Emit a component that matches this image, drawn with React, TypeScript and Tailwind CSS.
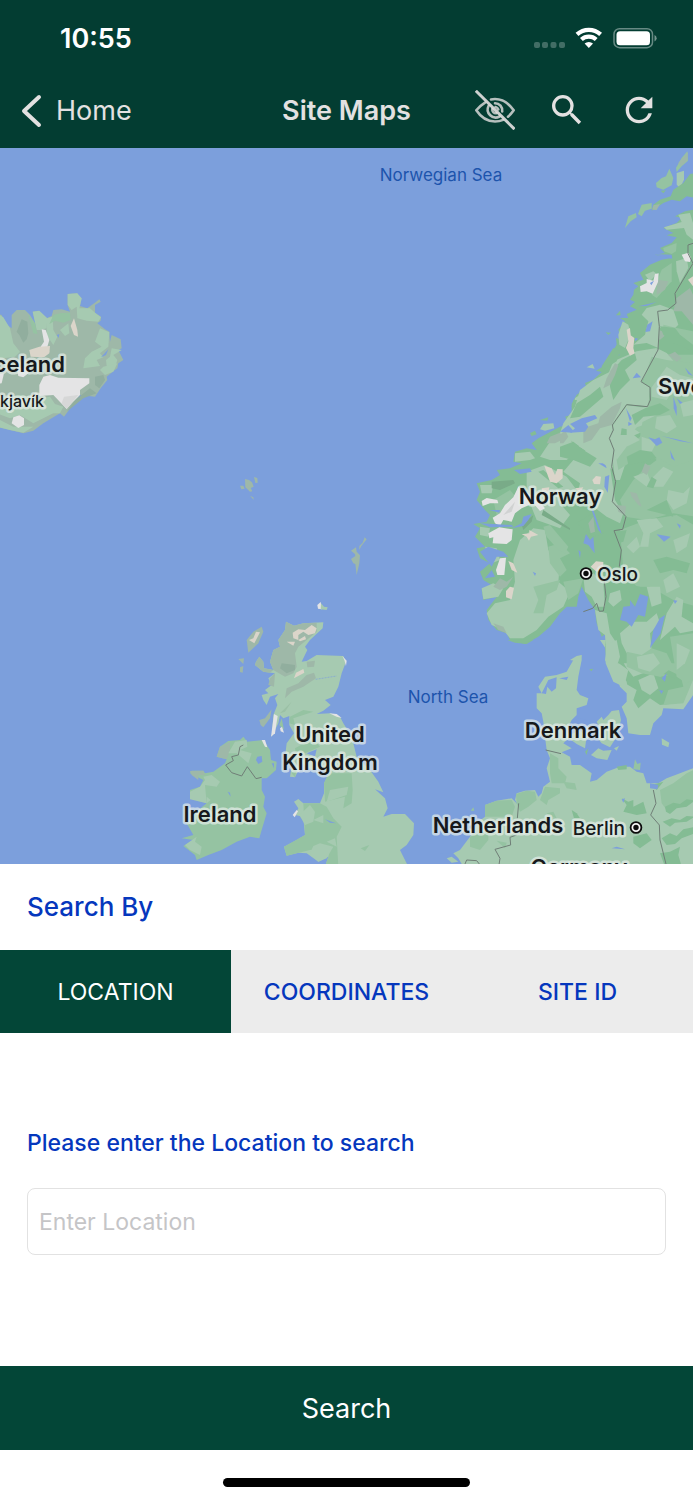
import { useState } from "react";
import type { ReactNode } from "react";
import { MdRefresh, MdSearch } from "react-icons/md";

const LIGHT = "#a6cab1";
const MID = "#95c3a2";
const DARK = "#84bc94";
const GREY = "#9eb8a8";
const SAND = "#dbd5ca";
const ICE = "#e4e4e5";
const SEA = "#7c9fdc";

type Patch = [fill: string, d: string];

/* Each region is drawn on its own grid, three units to one map pixel. */
const iceland: Patch[] = [
  [GREY, "M-10 100L5 105 15 130 35 145 35 105 50 90 75 90 90 105 105 130 112 150 98 95 115 92 140 115 155 108 160 90 185 88 210 95 203 75 203 42 232 40 235 52 245 55 240 78 262 85 275 75 285 68 298 58 302 65 285 75 285 98 303 110 302 122 292 130 315 148 328 155 330 185 335 165 362 178 365 205 355 210 370 240 355 250 352 265 338 275 320 290 322 300 302 325 285 350 240 345 192 410 180 400 160 412 130 430 100 452 70 460 30 450 -10 440Z"],
  [LIGHT, "M-10 100L10 112 30 145 40 190 60 215 45 230 10 235 -10 260Z"],
  [LIGHT, "M-10 350L20 350 60 345 120 355 150 350 165 372 190 380 180 400 160 400 130 415 100 430 60 405 30 415 -10 400Z"],
  [LIGHT, "M-10 415L40 440 100 440 70 458 30 450 -10 440Z"],
  [LIGHT, "M98 95L118 92 142 115 140 145 122 150 110 150Z"],
  [LIGHT, "M140 115L158 110 160 150 172 170 160 195 140 165Z"],
  [LIGHT, "M203 42L232 40 245 55 238 85 270 85 285 98 303 112 295 125 260 122 232 115 230 80 215 90 203 75Z"],
  [LIGHT, "M300 145L328 157 325 200 300 220 310 232 290 240 300 258 250 265 255 235 275 215 305 200 285 185Z"],
  [LIGHT, "M335 205L365 210 340 225 352 240 345 262 320 258 318 240 330 230Z"],
  [LIGHT, "M310 260L352 250 340 275 315 285 300 270Z"],
  [MID, "M160 105L180 100 210 98 212 120 190 128 165 122 148 132Z"],
  [MID, "M85 105L105 130 112 162 100 160 92 130Z"],
  [LIGHT, "M180 150L205 130 208 160 195 168Z"],
  ["#91ae9e", "M50 155L65 118 82 125 85 160 80 178 70 188 58 165Z"],
  ["#91ae9e", "M285 290L310 285 315 300 298 325 285 315Z"],
  ["#91ae9e", "M225 360L270 325 290 340 250 355 200 395Z"],
  [ICE, "M125 148L137 150 148 180 142 200 148 215 115 210 132 185Z"],
  [SAND, "M88 210L118 200 150 198 148 220 132 232 92 230Z"],
  [SAND, "M222 115L232 150 234 170 222 165 212 138Z"],
  [ICE, "M50 265L85 262 85 280 70 292 55 288Z"],
  [ICE, "M-10 282L12 280 5 310 -10 312Z"],
  [ICE, "M118 315L130 290 150 285 175 293 268 295 268 310 240 330 240 345 215 370 200 387 160 345 118 348Z"],
  ["#d6d7d7", "M192 350L235 345 200 387 185 370Z"],
  [ICE, "M35 430L40 412 58 406 72 415 72 435 55 444Z"],
  [SEA, "M170 165L178 162 176 174Z"],
  [SEA, "M303 232L325 208 318 225Z"],
];

const northNorway: Patch[] = [
  [DARK, "M699 185L675 190 645 205 665 210 650 225 610 240 640 255 620 262 650 268 635 285 600 300 615 315 585 320 635 330 605 335 570 350 540 375 550 395 520 405 535 415 522 425 520 440 510 455 525 462 510 475 530 485 500 498 505 510 480 510 495 520 475 545 485 575 468 570 470 590 455 615 480 620 440 640 430 655 408 668 425 672 400 695 375 705 380 720 350 740 335 768 335 800 710 800 710 185Z"],
  [MID, "M648 60L665 30 682 10 684 38 665 55 650 72Z"],
  [GREY, "M655 45L684 12 682 38 662 55Z"],
  [MID, "M588 105L605 90 618 85 628 62 640 90 635 112 610 125 590 118Z"],
  [LIGHT, "M650 75L672 68 672 95 660 120 650 110Z"],
  [DARK, "M640 125L670 105 690 78 710 75 710 150 680 145 660 160 635 155 610 165 575 188 580 170 600 155 632 145Z"],
  [GREY, "M580 172L600 168 590 186 577 185Z"],
  [MID, "M534 198L545 170 575 165 575 182 555 188 545 205Z"],
  [MID, "M495 240L505 205 528 195 530 208 512 220Z"],
  [DARK, "M602 128L618 127 610 136Z"],
  [DARK, "M468 502L480 488 482 502Z"],
  [DARK, "M437 553L453 554 445 561Z"],
  [LIGHT, "M380 658L398 648 404 662Z"],
  [LIGHT, "M655 200L690 195 699 225 699 275 680 260 672 240 620 245 612 238 665 222Z"],
  [MID, "M610 300L650 285 648 310 635 318 612 310Z"],
  [LIGHT, "M648 340L680 330 685 360 660 405 650 370Z"],
  [LIGHT, "M555 380L580 370 590 378 570 400Z"],
  [MID, "M605 365L635 345 635 400 590 450 575 440Z"],
  [GREY, "M592 395L625 400 615 425 590 440Z"],
  [GREY, "M650 450L690 420 699 440 699 530 665 490 640 490Z"],
  [GREY, "M575 540L625 555 600 575 575 568Z"],
  [LIGHT, "M560 480L600 470 640 485 655 530 640 545 600 540 595 600 560 585 520 590 555 560 565 520 545 500Z"],
  [LIGHT, "M475 560L488 520 505 530 512 560 495 600 478 590Z"],
  [LIGHT, "M530 610L590 600 575 650 545 700 565 720 570 780 420 800 340 790 345 750 385 725 400 705 440 690 460 640Z"],
  [MID, "M600 610L630 620 699 620 710 800 575 800 575 700 550 700 580 645Z"],
  [LIGHT, "M590 600L620 615 650 650 600 670 600 720 575 715 560 695Z"],
  [LIGHT, "M640 690L690 660 699 720 665 720Z"],
  [MID, "M610 530L650 540 699 550 699 605 650 580 610 560Z"],
  [DARK, "M600 535L645 540 660 560 699 590 699 610 640 585 610 560Z"],
  [DARK, "M485 650L510 640 515 660 490 680 480 710 460 720 455 690Z"],
  [DARK, "M460 600L480 610 470 640 430 665 425 655Z"],
  [GREY, "M450 670L470 650 470 680 450 725 432 730 435 700Z"],
  [GREY, "M640 650L660 640 690 670 680 690Z"],
  [MID, "M400 725L430 720 425 750 405 760 385 745Z"],
  [SAND, "M500 545L510 540 512 562 523 570 520 600 526 625 513 629 498 600 505 580Z"],
  [SAND, "M684 395L699 385 710 410 699 415Z"],
  [ICE, "M540 415L560 405 560 393 580 398 585 378 596 376 594 402 578 437 560 430 542 432Z"],
  [ICE, "M665 320L685 314 693 330 690 342 675 340Z"],
  [SEA, "M570 405L582 398 574 412Z"],
  [SEA, "M562 530L578 520 570 550 556 552Z"],
  [SEA, "M528 675L540 685 538 690 520 690Z"],
  [SEA, "M525 570L535 572 525 580Z"],
  [SEA, "M672 655L690 670 699 690 680 678Z"],
  [SEA, "M585 318L635 320 637 332 605 326Z"],
  [SEA, "M535 475L590 462 560 474Z"],
];

const southNorway: Patch[] = [
  [DARK, "M340 0L335 20 350 40 315 50 330 75 300 80 235 115 215 130 230 150 200 145 165 155 160 185 185 190 150 205 110 210 120 225 95 240 50 250 60 275 50 300 75 330 90 345 80 365 40 372 60 385 45 410 75 440 50 445 60 475 90 490 60 515 70 540 95 555 65 570 70 600 110 590 80 630 85 660 110 690 140 700 150 720 195 732 235 710 270 680 300 640 320 620 350 620 355 590 365 560 385 600 405 630 410 670 425 710 440 700 435 740 440 790 710 790 710 0Z"],
  [LIGHT, "M240 88L250 72 280 70 283 85 255 92Z"],
  [DARK, "M210 100L225 92 230 103 215 108Z"],
  [DARK, "M240 60L265 52 262 62Z"],
  [LIGHT, "M490 30L565 20 590 60 560 90 490 120 500 180 480 240 465 240 455 150 450 115 460 75Z"],
  [MID, "M520 85L600 60 699 60 710 350 640 340 560 360 495 350 480 300 520 240 570 190 540 160 570 120Z"],
  [LIGHT, "M380 100L445 85 450 200 465 300 490 340 480 370 440 350 400 320 350 290 360 250 310 215 340 180 380 150 355 140Z"],
  [MID, "M480 390L560 360 650 345 710 380 710 620 640 600 570 560 530 560 490 510 485 450Z"],
  [LIGHT, "M250 155L280 110 330 115 350 155 320 180 270 180 240 170Z"],
  [LIGHT, "M200 215L255 195 320 230 350 270 300 310 330 345 300 385 230 360 210 310 200 270Z"],
  [LIGHT, "M180 420L220 385 255 390 265 450 300 490 295 545 330 575 310 620 265 650 230 690 190 715 150 715 130 690 95 675 80 640 105 610 150 600 165 545 160 480Z"],
  [MID, "M265 440L300 430 330 460 300 475 320 510 300 530 270 490Z"],
  [MID, "M250 380L270 375 325 440 315 460 295 450 260 410Z"],
  [MID, "M220 560L300 540 290 570 260 585 250 640 220 640 235 600Z"],
  [MID, "M310 545L370 535 355 580 325 600Z"],
  [LIGHT, "M60 255L100 255 95 280 65 280Z"],
  [LIGHT, "M60 380L90 385 85 410 60 405Z"],
  [LIGHT, "M75 440L110 445 120 480 95 490Z"],
  [LIGHT, "M65 565L100 550 130 565 115 590 70 598Z"],
  [LIGHT, "M165 160L210 155 225 175 210 180 165 185Z"],
  [MID, "M100 300L150 270 175 300 140 340 110 345Z"],
  [LIGHT, "M370 530L400 520 430 550 435 620 410 620 395 590 375 575Z"],
  [LIGHT, "M405 630L440 640 450 700 470 730 460 790 440 780 435 705 415 690Z"],
  [LIGHT, "M480 700L520 665 560 665 590 640 600 670 570 700 575 750 550 770 500 760 485 730Z"],
  [LIGHT, "M620 640L650 590 670 600 665 650 699 670 710 690 660 700 645 680 600 720Z"],
  [LIGHT, "M610 540L640 520 660 560 620 580Z"],
  [LIGHT, "M450 580L480 570 485 600 460 620 445 605Z"],
  [LIGHT, "M560 560L600 560 605 610 575 620Z"],
  [LIGHT, "M530 360L590 355 610 380 570 400 565 440 540 440 550 400Z"],
  [LIGHT, "M520 230L560 215 570 240 610 200 640 215 610 260 560 260Z"],
  [LIGHT, "M600 90L660 85 690 130 650 160 620 140Z"],
  [LIGHT, "M625 270L670 280 690 260 680 310 640 330 620 300Z"],
  [LIGHT, "M500 440L530 410 540 440 520 460Z"],
  [LIGHT, "M640 420L690 400 680 440 650 460Z"],
  [DARK, "M480 180L520 160 560 150 590 180 570 195 530 180 495 195Z"],
  [DARK, "M560 330L620 300 640 350 600 340Z"],
  [DARK, "M580 480L620 470 690 490 680 520 640 510 600 520Z"],
  [DARK, "M470 395L500 390 490 425 475 430Z"],
  [DARK, "M560 260L575 230 590 240 580 265Z"],
  [DARK, "M640 100L660 110 690 105 680 130 660 130Z"],
  [DARK, "M490 550L540 560 560 590 520 590Z"],
  [DARK, "M350 370L405 335 430 400 400 410Z"],
  [DARK, "M235 215L250 210 310 260 295 265Z"],
  [GREY, "M270 110L325 88 325 110 285 130 260 130Z"],
  [GREY, "M510 275L530 280 545 320 535 315 515 290Z"],
  [GREY, "M545 215L555 190 572 200 560 225Z"],
  [GREY, "M385 370L400 350 405 395 392 400Z"],
  [GREY, "M100 560L120 535 140 545 160 530 140 560 120 570Z"],
  [GREY, "M100 670L130 680 140 700 115 690Z"],
  [GREY, "M470 315L498 318 495 345 475 335Z"],
  ["#79ab88", "M95 245L160 240 165 250 120 270 95 265Z"],
  ["#79ab88", "M250 330L330 385 330 390 245 345Z"],
  ["#79ab88", "M185 375L220 345 215 365 190 390Z"],
  [SAND, "M253 197L275 205 285 225 292 207 308 208 308 235 290 250 270 245Z"],
  [SAND, "M397 240L408 228 423 230 420 253 402 252Z"],
  [SAND, "M185 403L208 400 208 390 235 405 213 410 207 422 200 410Z"],
  [SAND, "M145 483L160 490 172 518 155 510Z"],
  [SAND, "M138 573L150 560 162 563 155 598 138 592Z"],
  [SAND, "M392 500L408 484 430 486 430 505 410 515Z"],
  [SAND, "M245 265L268 262 265 280 248 280Z"],
  [SAND, "M345 265L370 262 360 278Z"],
  [ICE, "M65 303L80 294 112 300 115 310 90 310 68 318Z"],
  [ICE, "M98 353L120 340 135 315 160 292 175 260 235 300 255 325 240 333 220 310 185 325 165 340 155 365 130 360 120 378 105 370Z"],
  [ICE, "M85 400L118 382 158 388 155 420 140 432 98 430 100 412 88 415Z"],
  [ICE, "M108 510L120 475 138 473 133 525 112 525Z"],
  ["#d0d2d2", "M130 345L165 305 155 335Z"],
  [SEA, "M162 210L210 205 215 215 180 222Z"],
  [SEA, "M60 370L155 375 160 380 90 382Z"],
  [SEA, "M155 385L185 370 190 350 215 342 205 360 190 378Z"],
  [SEA, "M88 330L120 330 118 338Z"],
  [SEA, "M60 455L85 440 130 455 145 470 110 470 95 500Z"],
  [SEA, "M75 535L95 510 105 530Z"],
  [SEA, "M435 230L448 225 443 278 433 260Z"],
  [SEA, "M393 325L400 330 425 402 415 390Z"],
  [SEA, "M378 402L390 420 400 410 404 460 385 435 370 430Z"],
  [SEA, "M415 190L435 190 440 205Z"],
  [SEA, "M605 112L655 120 699 130 699 136 650 125Z"],
  [SEA, "M590 403L632 410 612 425Z"],
  [SEA, "M480 660L490 620 510 618 510 600 525 620 540 582 565 590 555 650 535 645 515 680 500 665Z"],
  [SEA, "M570 745L580 690 600 655 615 645 602 700Z"],
  [SEA, "M650 370L662 376 660 386Z"],
  [SEA, "M218 515L228 520 225 528Z"],
  [SEA, "M355 450L362 455 360 475Z"],
  [SEA, "M640 600L652 602 645 612Z"],
  [LIGHT, "M330 780L350 768 365 765 360 785Z"],
  [LIGHT, "M437 735L470 720 480 770 470 800 500 845 505 875 480 855 460 845 437 790Z"],
  [MID, "M500 755L545 765 575 745 620 760 640 800 600 830 545 820 500 800Z"],
  [LIGHT, "M530 770L580 760 600 790 570 815 535 805Z"],
  [MID, "M630 710L699 700 710 830 680 850 650 830 640 770Z"],
  [LIGHT, "M650 730L690 750 675 790 650 810Z"],
];

/* Border country between Trondheim and Jämtland, drawn over both Norwegian sheets. */
const midNorway: Patch[] = [
  [LIGHT, "M60 270L100 240 150 215 190 200 220 170 290 150 245 245 270 262 265 320 200 313 160 375 150 415 160 450 158 510 100 470 60 440 30 420 0 400 10 370 45 320Z"],
  [MID, "M275 170L320 180 399 190 399 480 340 500 290 470 230 475 175 510 165 450 200 440 240 410 250 350 265 322 272 262 248 245Z"],
  [LIGHT, "M165 375L200 315 265 325 290 345 240 370 215 400 240 420 200 440 170 480 150 415Z"],
  [LIGHT, "M320 200L360 225 399 235 399 280 340 270 320 300 275 290 275 262Z"],
  [LIGHT, "M360 310L399 300 399 345 370 350Z"],
  [LIGHT, "M290 350L330 345 350 380 320 400 285 385Z"],
  [LIGHT, "M245 410L290 425 275 455 245 460Z"],
  [DARK, "M150 220L185 180 225 160 230 180 195 210 210 240 180 270 160 300 150 260Z"],
  [DARK, "M50 310L90 285 120 260 130 290 95 320 60 350 30 355Z"],
  [DARK, "M215 345L255 325 300 310 330 330 300 345 250 350 225 375Z"],
  [DARK, "M185 385L200 388 200 405 182 405Z"],
  [DARK, "M200 470L240 450 275 455 290 475 250 485 205 495Z"],
  [DARK, "M0 440L40 425 70 450 110 475 90 500 40 480 0 470Z"],
  [GREY, "M140 235L165 190 175 195 165 225 150 255 130 265Z"],
  [GREY, "M70 385L115 370 120 350 155 320 185 305 180 325 155 375 120 385 95 420 70 430Z"],
  [GREY, "M0 405L15 390 25 410 10 430 0 430Z"],
  [GREY, "M325 165L345 155 365 175 350 185Z"],
  [SEA, "M25 375L40 392 35 398 0 395Z"],
  [SEA, "M30 372L65 355 105 345 112 355 78 370 85 380 75 395 30 398 45 385Z"],
  [SEA, "M198 325L215 355 210 365Z"],
  [SEA, "M205 365L217 372 205 378Z"],
  [SEA, "M230 218L243 232 218 235Z"],
  [SEA, "M265 412L285 418 298 412 307 428 290 438Z"],
  [SEA, "M305 408L360 420 399 430 360 424Z"],
  [SEA, "M340 290L350 320 350 348 341 325Z"],
  [SEA, "M330 450L345 482 334 475Z"],
  [SEA, "M375 203L399 228 385 222Z"],
  [SEA, "M350 295L368 308 360 312Z"],
];

const denmark: Patch[] = [
  [LIGHT, "M540 0L560 30 555 60 570 90 590 110 600 140 620 160 620 185 605 200 620 235 625 280 660 285 690 285 700 250 725 225 730 205 790 208 830 150 830 0Z"],
  [DARK, "M575 20L600 0 819 0 819 30 790 15 770 60 780 110 800 140 770 190 720 195 690 175 655 205 640 180 650 150 615 130 625 90 590 65Z"],
  [MID, "M690 70L740 30 819 20 819 120 790 190 730 195 745 150 790 140 780 100 720 110Z"],
  [LIGHT, "M600 50L640 40 660 80 690 60 695 90 640 110 620 85Z"],
  [LIGHT, "M720 40L765 5 800 0 770 60 740 50Z"],
  [LIGHT, "M655 120L700 100 715 145 690 165 665 150Z"],
  [DARK, "M700 80L730 60 745 90 775 105 765 115 725 100Z"],
  [SEA, "M725 115L740 100 735 125Z"],
  [SEA, "M718 150L730 152 724 162Z"],
  [LIGHT, "M485 45L460 60 440 95 410 105 375 110 355 140 365 160 350 160 350 205 365 220 370 245 375 290 380 330 390 355 380 385 390 425 370 440 365 460 355 470 345 450 315 452 290 460 285 480 295 495 275 475 230 482 195 495 195 530 175 545 150 590 120 630 100 640 115 655 130 680 830 680 830 380 780 400 740 415 715 430 680 430 670 400 650 395 630 380 600 380 560 395 530 420 510 425 515 400 480 375 455 375 450 350 425 337 455 325 430 310 450 290 440 270 455 240 470 225 470 205 500 195 505 175 480 165 470 150 475 110 485 60Z"],
  [LIGHT, "M530 245L545 230 550 240 565 225 575 213 597 210 603 240 590 290 570 322 545 310 525 285 540 265Z"],
  [LIGHT, "M440 290L480 270 500 290 495 325 470 312Z"],
  [LIGHT, "M513 345L535 325 550 332 575 330 562 360 530 355Z"],
  [LIGHT, "M582 325L597 318 590 332Z"],
  [LIGHT, "M725 295L748 308 745 322 726 314Z"],
  [MID, "M640 388L645 358 652 372 662 368 660 390Z"],
  [DARK, "M508 88L520 86 514 94Z"],
  [DARK, "M495 335L505 325 500 345Z"],
  [DARK, "M262 0L340 0 320 12 285 8Z"],
  [MID, "M195 495L230 482 275 480 285 500 275 530 230 530 195 530Z"],
  [MID, "M288 462L320 452 345 455 350 480 325 500 300 515 290 490Z"],
  [MID, "M390 340L415 355 415 385 440 410 435 430 395 430 390 400Z"],
  [MID, "M375 440L420 445 420 460 385 480 380 495 360 480Z"],
  [MID, "M430 425L465 430 470 450 440 445Z"],
  [MID, "M150 590L205 570 205 600 180 630 150 620Z"],
  [MID, "M380 520L400 515 410 535 395 530Z"],
  [MID, "M720 450L760 430 800 400 830 385 830 480 780 500 740 510 725 490Z"],
  [DARK, "M590 380L620 375 620 388 595 390Z"],
  [DARK, "M605 475L625 485 640 480 640 500 670 485 680 520 650 525 610 515 620 495Z"],
  [DARK, "M455 510L470 520 480 535 462 535Z"],
  [DARK, "M640 590L680 580 695 600 660 625 640 610Z"],
  [DARK, "M735 500L760 488 780 492 800 478 825 482 800 500 770 505 750 522 738 515Z"],
  [DARK, "M728 545L755 535 780 540 800 528 825 530 800 545 765 548 750 560Z"],
  [DARK, "M725 595L750 580 770 588 790 568 819 562 825 580 785 595 765 612 740 615Z"],
  [DARK, "M720 640L750 635 780 620 775 645 785 680 735 680Z"],
  [MID, "M230 602L260 608 255 625Z"],
  [DARK, "M695 435L730 425 710 450Z"],
  [SEA, "M365 160L385 120 410 112 408 145 395 155 382 140 378 162Z"],
  [SEA, "M418 115L445 110 440 120Z"],
  [SEA, "M458 240L480 235 530 250 525 280 500 290 480 270Z"],
  [SEA, "M575 625L590 620 615 628Z"],
  [SEA, "M605 478L615 475 610 488Z"],
  [SEA, "M690 430L715 435 712 448 690 445Z"],
  [MID, "M152 512L160 502 163 512Z"],
  [SEA, "M60 640L100 642 112 655 128 680 60 680Z"],
  [LIGHT, "M80 655L95 650 115 665 95 668Z"],
];

const britain: Patch[] = [
  [LIGHT, "M348 95L372 107 400 100 460 97 458 115 420 150 405 170 412 180 395 215 410 213 440 195 520 198 528 215 515 250 505 290 490 320 465 330 482 345 460 362 440 372 480 370 510 380 520 400 545 440 560 500 600 540 625 575 640 607 615 598 645 625 653 655 640 680 665 672 705 672 732 700 730 735 710 765 690 780 700 800 715 830 465 830 475 800 445 815 410 790 385 788 350 797 342 770 380 750 405 735 402 705 400 680 375 675 385 655 372 635 385 627 400 640 450 640 462 610 462 580 475 555 450 530 425 540 395 520 375 562 360 560 365 530 345 500 350 460 372 430 358 405 358 378 340 385 330 375 325 400 305 440 310 375 322 345 315 325 325 312 300 320 290 345 280 330 275 315 295 310 285 300 305 285 295 265 315 250 280 245 255 225 258 215 268 200 280 215 282 235 310 240 300 215 310 180 330 170 325 150 345 120Z"],
  [GREY, "M348 95L372 107 400 100 440 98 440 125 410 150 385 170 375 190 380 230 370 250 345 260 310 240 300 215 310 180 330 170 325 150 345 120Z"],
  [GREY, "M345 325L350 295 385 280 410 255 432 248 438 265 400 290 365 305Z"],
  [GREY, "M410 215L435 212 432 230 412 232Z"],
  [GREY, "M300 265L315 250 312 290 295 285Z"],
  [GREY, "M255 225L258 215 268 200 280 215 282 235 310 240 300 248 280 245Z"],
  ["#9bc0a6", "M330 370L365 335 345 365Z"],
  ["#91ae9e", "M335 220L375 225 375 240 350 250 330 235Z"],
  [GREY, "M230 150L250 125 275 110 280 125 265 160 235 188Z"],
  [GREY, "M205 207L222 205 220 222Z"],
  [GREY, "M210 232L220 228 218 248 210 246Z"],
  [GREY, "M268 390L285 385 305 358 300 385 280 412 272 405Z"],
  [MID, "M328 405L335 385 342 420Z"],
  [SAND, "M237 150L250 145 258 125 270 127 253 160Z"],
  [SAND, "M368 128L385 118 405 120 425 105 440 115 435 130 415 135 400 125 385 135 385 150 370 145Z"],
  [SAND, "M385 150L405 138 408 148 390 154Z"],
  [SAND, "M350 155L375 155 370 167Z"],
  [SAND, "M372 265L378 248 400 237 403 248Z"],
  [ICE, "M303 440L312 372 323 378 315 430Z"],
  [ICE, "M330 415L336 410 342 428 332 424Z"],
  [ICE, "M517 198L530 212 528 228 523 210Z"],
  [ICE, "M442 45L452 36 456 58 444 56Z"],
  [LIGHT, "M453 40L462 50 473 52 470 60 452 58Z"],
  [MID, "M360 380L400 360 430 365 370 385 375 405 358 400Z"],
  [MID, "M475 550L545 550 548 600 545 640 520 655 525 620 465 635 462 580Z"],
  [LIGHT, "M480 600L535 590 530 615 470 635Z"],
  [MID, "M400 640L450 640 470 650 490 685 515 710 500 740 505 830 465 830 475 800 480 775 420 780 350 797 342 770 405 735Z"],
  [LIGHT, "M388 675L420 645 435 665 430 695 405 705Z"],
  [LIGHT, "M420 790L430 768 450 760 490 770 470 805 445 815Z"],
  [LIGHT, "M470 755L495 745 500 770Z"],
  [LIGHT, "M430 690L460 675 460 700Z"],
  [MID, "M572 775L598 765 585 783Z"],
  [MID, "M375 475L430 445 450 470 380 500Z"],
  [MID, "M365 550L380 535 375 562Z"],
  [MID, "M140 500L150 470 175 453 210 450 220 440 232 455 280 450 300 480 303 510 320 515 318 540 290 565 275 565 275 600 285 620 280 650 290 670 275 720 268 745 240 740 200 755 155 780 115 795 80 810 75 795 40 768 70 750 35 745 70 735 50 700 85 660 110 640 60 625 60 600 90 590 100 570 60 550 65 542 100 542 105 550 130 545 165 520 170 508Z"],
  [GREY, "M140 500L150 470 180 455 180 480 170 508Z"],
  [GREY, "M60 543L100 542 105 555 85 555 85 570 65 555Z"],
  [LIGHT, "M175 490L195 455 230 450 232 470 210 480 245 490 235 520 200 490Z"],
  [LIGHT, "M60 605L90 590 105 570 100 560 125 555 150 575 140 590 105 585 110 640 60 628Z"],
  [LIGHT, "M45 765L80 740 75 755 95 770 90 795 60 780Z"],
  [LIGHT, "M180 650L215 660 240 650 220 690Z"],
  [LIGHT, "M110 620L122 630 110 640Z"],
  [ICE, "M275 450L285 450 292 472 285 470Z"],
  [ICE, "M368 675L380 660 384 664 374 682Z"],
  [ICE, "M478 370L500 372 515 384 500 380Z"],
  [SEA, "M258 510L262 500 275 498 277 515 265 522Z"],
  [SEA, "M305 520L312 520 312 535Z"],
  [SEA, "M173 605L180 608 182 620Z"],
  [SEA, "M410 490L440 478 435 500Z"],
  [SEA, "M465 688L498 700 480 698Z"],
];

const smallIslands: Patch[] = [
  [GREY, "M45 57L57 60 66 67 71 80 62 84 67 94 60 95 46 82Z"],
  [GREY, "M72 51L82 54 83 68 76 69Z"],
  [GREY, "M30 77L40 77 44 86 34 88Z"],
  [GREY, "M60 107L70 112 71 119Z"],
  [GREY, "M404 232L410 238 394 258 388 270 388 258 398 248Z"],
  [GREY, "M363 272L378 262 380 275 390 286 388 310 380 345 376 312 370 310 363 297 376 288 375 282Z"],
];

function Patches({ items }: { items: Patch[] }) {
  return (
    <>
      {items.map(([fill, d]) => (
        <path key={d} d={d} fill={fill} />
      ))}
    </>
  );
}

function Place({ x, y, size = 22, anchor = "start", weight = 600, children }: {
  x: number; y: number; size?: number; anchor?: "start" | "middle" | "end"; weight?: number; children: ReactNode;
}) {
  return (
    <text x={x} y={y} fontSize={size} textAnchor={anchor} fontWeight={weight} fill="#17191c"
      stroke="#e6eeea" strokeOpacity={0.7} strokeWidth={5} strokeLinejoin="round" paintOrder="stroke">
      {children}
    </text>
  );
}

function Capital({ x, y }: { x: number; y: number }) {
  return (
    <g>
      <circle cx={x} cy={y} r={5.4} fill="#f4f4f4" stroke="#0c0c0c" strokeWidth={1.8} />
      <circle cx={x} cy={y} r={2.7} fill="#0c0c0c" />
    </g>
  );
}

function SiteMap() {
  return (
    <svg viewBox="0 148 693 716" preserveAspectRatio="xMidYMid slice" role="img" aria-label="Map of northern Europe"
      className="absolute inset-0 size-full font-['Inter','Liberation_Sans',sans-serif]">
      <rect x="-1000" y="-1000" width="3000" height="3000" fill={SEA} />
      <g transform="translate(0 280) scale(.33333)"><Patches items={iceland} /></g>
      <g transform="translate(230 460) scale(.33333)"><Patches items={smallIslands} /></g>
      <g transform="translate(170 590) scale(.33333)">
        <Patches items={britain} />
        <path d="M220 465L210 470 205 495 185 500 190 512 167 525 185 548 215 558 232 530 258 566 275 562" fill="none" stroke="#6f7d76" strokeWidth="3" />
        <path d="M437 268L500 258" stroke="#7c9fdc" strokeWidth="2" strokeDasharray="6 3" />
      </g>
      <g transform="translate(460 148) scale(.33333)"><Patches items={northNorway} /></g>
      <g transform="translate(420 640) scale(.33333)">
        <Patches items={denmark} />
        <path d="M377 330L423 341M296 490L292 535M290 585L270 592 272 615 225 628 240 655 237 675M700 450L708 490 692 525 718 555 720 600 738 672M135 672L140 660 170 662 178 672" fill="none" stroke="#6f7d76" strokeWidth="3" />
      </g>
      <g transform="translate(460 400) scale(.33333)"><Patches items={southNorway} /></g>
      <g transform="translate(560 300) scale(.33333)"><Patches items={midNorway} /></g>
      <g transform="translate(460 400) scale(.33333)">
        <path d="M699 -470L684 -465 684 -440 699 -410 678 -375 645 -320 648 -290 623 -270 593 -266 598 -220 594 -150 543 -55 570 -38 571 0 562 20 500 14 457 75 460 90 448 115 462 150 455 200 467 245 457 305 498 350 488 388 462 392 484 450 478 500M433 545L438 590 430 633 418 634 410 610 398 625 370 635" fill="none" stroke="#6f7d76" strokeWidth="3" />
      </g>
      <g fill="#1d54ac" fontSize="17" textAnchor="middle">
        <text x="441" y="181">Norwegian Sea</text>
        <text x="448" y="703">North Sea</text>
      </g>
      <Place x={65} y={372} anchor="end">Iceland</Place>
      <Place x={44} y={407} size={16} anchor="end" weight={500}>Reykjavík</Place>
      <Place x={658} y={394}>Sweden</Place>
      <Place x={560} y={504} anchor="middle">Norway</Place>
      <Place x={597} y={581} size={19} weight={500}>Oslo</Place>
      <Place x={573} y={738} anchor="middle">Denmark</Place>
      <Place x={330} y={742} anchor="middle">United</Place>
      <Place x={330} y={770} anchor="middle">Kingdom</Place>
      <Place x={220} y={822} anchor="middle">Ireland</Place>
      <Place x={498} y={833} anchor="middle">Netherlands</Place>
      <Place x={625} y={835} size={19} anchor="end" weight={500}>Berlin</Place>
      <Place x={579} y={875} anchor="middle">Germany</Place>
      <Capital x={586} y={573.5} />
      <Capital x={636} y={827.5} />
    </svg>
  );
}

function StatusIcons() {
  return (
    <svg width="124" height="24" viewBox="0 0 124 24" aria-hidden="true">
      <g fill="#fff" fillOpacity=".25">
        <rect x="1" y="15" width="6" height="6" rx="2" />
        <rect x="9" y="15" width="6" height="6" rx="2" />
        <rect x="17.5" y="15" width="6" height="6" rx="2" />
        <rect x="26" y="15" width="6" height="6" rx="2" />
      </g>
      <g fill="none" stroke="#fff" strokeWidth="4.2">
        <path d="M44 7.400A17.500 17.500 0 0 1 67.600 7.400" />
        <path d="M48.400 12.500A11 11 0 0 1 63.200 12.500" />
      </g>
      <path d="M55.800 21L51.600 16.600A6.400 6.400 0 0 1 60 16.600Z" fill="#fff" />
      <rect x="81" y="1.700" width="38.500" height="19" rx="5.500" fill="none" stroke="#fff" strokeOpacity=".4" strokeWidth="1.500" />
      <rect x="83.500" y="4.200" width="33.500" height="14" rx="3.500" fill="#fff" />
      <path d="M121.500 8a3.600 3.600 0 0 1 0 6.600Z" fill="#fff" fillOpacity=".45" />
    </svg>
  );
}

function HiddenEyeIcon() {
  return (
    <svg width="40" height="40" viewBox="0 0 40 40" fill="none" stroke="currentColor" aria-hidden="true">
      <g strokeWidth="2.6" strokeLinecap="round" strokeLinejoin="round" opacity=".8">
        <path d="M10 12.600C6.500 14.800 3.500 17.600 1.300 20.300 6 27.500 12.500 31.500 20 31.500 22.800 31.500 25.500 31 28 29.800" />
        <path d="M16 9.500C17.500 9.100 18.700 9 20 9 27.500 9 34 13.500 38.700 20.300 37 22.800 35 25 33 26.700" />
        <path d="M13.500 16A8 8 0 0 0 24.500 26.500" />
        <path d="M20 13.200A7.300 7.300 0 0 1 27.200 21.500" />
        <path d="M17.300 19A3.800 3.800 0 0 0 21.300 23.300M20.500 17A3.800 3.800 0 0 1 23.300 19.500" />
      </g>
      <path d="M.8.800L39.500 39.200" strokeWidth="3" opacity=".9" />
    </svg>
  );
}

const tabs = [
  { name: "LOCATION", prompt: "Please enter the Location to search", hint: "Enter Location" },
  { name: "COORDINATES", prompt: "Please enter the Coordinates to search", hint: "Enter Coordinates" },
  { name: "SITE ID", prompt: "Please enter the Site ID to search", hint: "Enter Site ID" },
];

export default function App() {
  const [active, setActive] = useState(0);
  const tab = tabs[active];

  return (
    <div className="flex min-h-screen flex-col bg-white font-['Inter','Liberation_Sans',sans-serif]">
      <header className="bg-[#033d32] text-[#e3e1e1]">
        <div className="flex h-[74px] items-center justify-between pr-[36px] pl-[60px] pt-1">
          <span className="text-[27px] leading-8 font-semibold text-white">10:55</span>
          <StatusIcons />
        </div>
        <nav className="grid h-[74px] grid-cols-[1fr_auto_1fr] items-center">
          <a href="#home" className="flex items-center gap-3 pl-5 text-[27px] leading-8">
            <svg width="24" height="36" viewBox="0 0 24 36" fill="none" aria-hidden="true">
              <path d="M19 4L4 18 19 32" stroke="currentColor" strokeWidth="4" strokeLinecap="round" strokeLinejoin="round" />
            </svg>
            Home
          </a>
          <h1 className="text-[27px] leading-8 font-semibold">Site Maps</h1>
          <div className="flex items-center justify-end gap-8 pr-[34px] pb-[2px]">
            <button type="button" aria-label="Hide sites"><HiddenEyeIcon /></button>
            <button type="button" aria-label="Search map"><MdSearch size={40} /></button>
            <button type="button" aria-label="Refresh"><MdRefresh size={40} /></button>
          </div>
        </nav>
      </header>

      <div className="relative min-h-[360px] flex-1 overflow-hidden">
        <SiteMap />
      </div>

      <main>
        <h2 className="px-[27px] py-[27px] text-[26px] leading-8 font-medium text-[#0537bd]">Search By</h2>
        <div role="tablist" className="grid grid-cols-3 bg-[#ececec]">
          {tabs.map((t, i) => (
            <button key={t.name} type="button" role="tab" aria-selected={i === active} onClick={() => setActive(i)}
              className={i === active
                ? "h-[83px] bg-[#034637] text-[23px] leading-8 text-white"
                : "h-[83px] text-[23px] leading-8 font-medium text-[#0537bd]"}>
              {t.name}
            </button>
          ))}
        </div>
        <form onSubmit={(e) => e.preventDefault()}>
          <div className="px-[27px] pt-[94px] pb-[111px]">
            <label htmlFor="query" className="block text-[23px] leading-8 font-medium text-[#0537bd]">{tab.prompt}</label>
            <input id="query" type="text" placeholder={tab.hint}
              className="mt-[29px] block h-[67px] w-full rounded-lg border border-[#e2e2e2] px-[11px] text-[23px] text-black outline-none placeholder:text-[#c5c5c7]" />
          </div>
          <button type="submit" className="block h-[84px] w-full bg-[#034637] pt-[2px] text-[27px] leading-8 text-white">Search</button>
        </form>
      </main>
      <footer className="flex h-[50px] items-center justify-center pt-[14px]">
        <div className="h-[9px] w-[247px] rounded-full bg-black" />
      </footer>
    </div>
  );
}
